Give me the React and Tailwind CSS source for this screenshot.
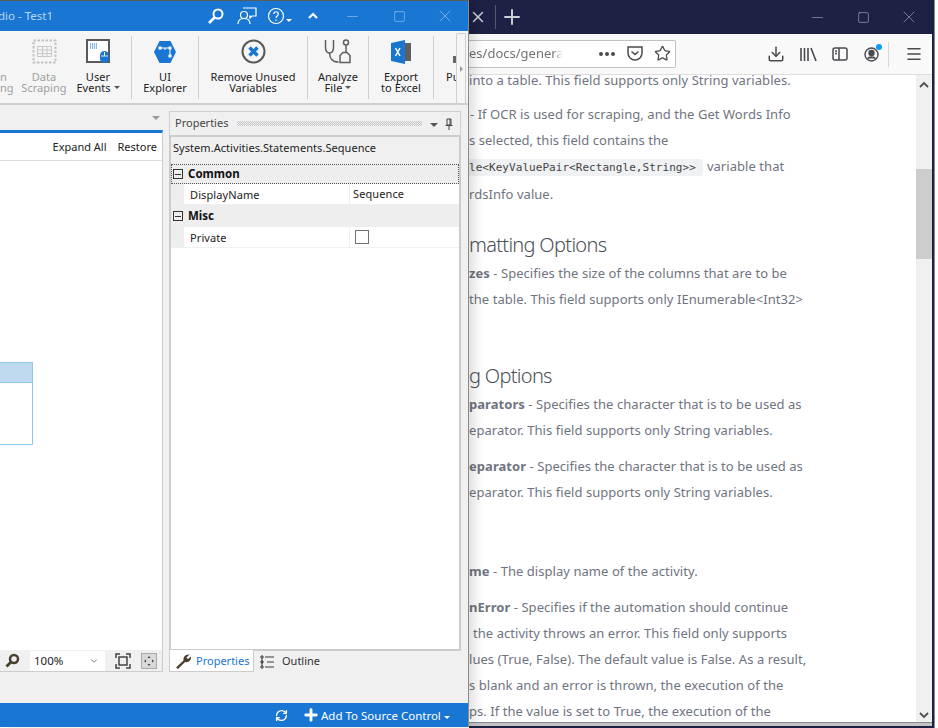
import React from 'react';
import { ChevronDown, Plus, RefreshCw, Star, X, Minus, Square, Download, Menu } from 'lucide-react';

const Caret = ({ className = 'border-t-[#555]' }) => (
  <span className={`inline-block w-0 h-0 border-x-[3px] border-x-transparent border-t-[3px] ${className}`} />
);

const Sep = () => <div className="w-px h-[63px] mt-[5px] bg-[#cfcfcf] shrink-0" />;

const RibbonItem = ({ icon, lines, width, dim, caret }) => (
  <div className={`${width} shrink-0 flex flex-col items-center`}>
    <div className="h-[33px] flex items-end justify-center">{icon}</div>
    <div className={`mt-[7px] text-[11px] tracking-[0.05px] leading-[11px] text-center whitespace-nowrap ${dim ? 'text-[#a0a0a0]' : 'text-[#222]'}`}>
      <div>{lines[0]}</div>
      <div className="flex items-center justify-center gap-[3px]">
        {lines[1]}
        {caret && <Caret />}
      </div>
    </div>
  </div>
);

const DataIcon = () => (
  <svg width="25" height="25" viewBox="0 0 25 25" fill="none">
    <rect x="1.500" y="1.500" width="22" height="22" stroke="#c4c4c4" strokeWidth="2" strokeDasharray="2.5 1.5" />
    <path d="M5.500 7.500h14v10h-14zM5.500 11h14M5.500 14.500h14M10.500 7.500v10M15 7.500v10" stroke="#c9c9c9" />
  </svg>
);

const UserEventsIcon = () => (
  <svg width="25" height="25" viewBox="0 0 25 25" fill="none">
    <rect x="1" y="1" width="22" height="22" fill="#fff" stroke="#5a5a5a" strokeWidth="2" />
    <path d="M4 5h7M4 7h7M4 9h7" stroke="#1976d2" strokeWidth="1.2" strokeDasharray="1.2 0.8" />
    <rect x="14" y="12" width="9" height="12" rx="4.5" fill="#1976d2" />
    <path d="M18.500 13v4" stroke="#fff" />
    <path d="M15 17h7" stroke="#fff" strokeWidth="0.8" />
  </svg>
);

const ExplorerIcon = () => (
  <svg width="22" height="24" viewBox="0 0 22 24">
    <path d="M5.500 1h11L22 12l-5.500 11h-11L0 12z" fill="#1976d2" />
    <path d="M6 8h10M16 8v8M11 8v2" stroke="#fff" strokeWidth="1" fill="none" />
    <rect x="4.500" y="6.500" width="3" height="3" fill="#fff" />
    <rect x="14.500" y="6.500" width="3" height="3" fill="#fff" />
    <rect x="14.500" y="14.500" width="3" height="3" fill="#fff" />
  </svg>
);

const RemoveIcon = () => (
  <svg width="25" height="25" viewBox="0 0 25 25" fill="none">
    <circle cx="12.500" cy="12.500" r="11" stroke="#595959" strokeWidth="2" />
    <path d="M8.500 8.500l8 8M16.500 8.500l-8 8" stroke="#1976d2" strokeWidth="3.400" />
  </svg>
);

const AnalyzeIcon = () => (
  <svg width="28" height="25" viewBox="0 0 28 25" fill="none" stroke="#5f5f5f" strokeWidth="1.500">
    <path d="M1.500 1v7c0 4 2 6 4 6s4-2 4-6V1" />
    <path d="M5.500 14c0 5 3 9 9 9" />
    <circle cx="22" cy="3.500" r="2.500" />
    <path d="M22 6v7" />
    <path d="M16 23.500h10v-7l-3-3h-4l-3 3z" />
  </svg>
);

const ExcelIcon = () => (
  <svg width="20" height="24" viewBox="0 0 20 24">
    <rect x="13" y="3" width="7" height="18" fill="#5f5f5f" />
    <path d="M0 3l14-3v24L0 21z" fill="#1976d2" />
    <path d="M4.500 8l4.500 8M9 8l-4.500 8" stroke="#fff" strokeWidth="1.500" fill="none" />
  </svg>
);

const lines = [
  { cls: '', text: 'into a table. This field supports only String variables.' },
  { cls: 'mt-[8px] pl-[1px]', text: '- If OCR is used for scraping, and the Get Words Info' },
  { cls: '', text: 's selected, this field contains the' },
  { cls: '', code: true },
  { cls: 'mt-[2px]', text: 'rdsInfo value.' },
  { cls: 'mt-[25px] text-[20px] tracking-[-0.7px] font-light text-[#4a4f55]', text: 'matting Options' },
  { cls: 'mt-[2px]', bold: 'zes', text: ' - Specifies the size of the columns that are to be' },
  { cls: '', text: 'the table. This field supports only IEnumerable<Int32>' },
  { cls: 'mt-[51px] text-[20px] tracking-[-0.7px] font-light text-[#4a4f55]', text: 'g Options' },
  { cls: 'mt-[2px]', bold: 'parators', text: ' - Specifies the character that is to be used as' },
  { cls: '', text: 'eparator. This field supports only String variables.' },
  { cls: 'mt-[10px]', bold: 'eparator', text: ' - Specifies the character that is to be used as' },
  { cls: '', text: 'eparator. This field supports only String variables.' },
  { cls: 'mt-[53px]', bold: 'me', text: ' - The display name of the activity.' },
  { cls: 'mt-[10px]', bold: 'nError', text: ' - Specifies if the automation should continue' },
  { cls: 'pl-[4px]', text: 'the activity throws an error. This field only supports' },
  { cls: '', text: 'lues (True, False). The default value is False. As a result,' },
  { cls: '', text: 's blank and an error is thrown, the execution of the' },
  { cls: '', text: 'ps. If the value is set to True, the execution of the' },
];

const PropRow = ({ name, children }) => (
  <div className="flex h-[21px] border-b border-[#f0f0f0] text-[11px] tracking-[0.1px] text-[#222]">
    <div className="w-[13px] bg-[#eeeeee] shrink-0" />
    <div className="w-[166px] pl-[6px] leading-[22px] border-r border-[#eeeeee]">{name}</div>
    <div className="flex-1 pl-[3px] leading-[19px]">{children}</div>
  </div>
);

const Toggle = () => (
  <span className="w-[10px] h-[10px] border border-[#333] flex items-center justify-center shrink-0">
    <span className="w-[6px] h-px bg-[#333]" />
  </span>
);

const App = () => (
  <div className="w-[938px] h-[728px] flex overflow-hidden bg-white font-['Noto_Sans',sans-serif]">
    {/* studio window */}
    <div className="relative z-10 w-[469px] h-[727px] shrink-0 flex flex-col bg-[#f0f0f0] border-r border-[#8a8a8a] border-t border-t-[#5a5a5a] shadow-[6px_0_10px_rgba(0,0,0,0.12)]">
      <div className="h-[30px] bg-[#1976d2] flex items-center text-white shrink-0">
        <span className="text-[11.5px] text-[#b9d6f3] w-[208px] -ml-[2px] whitespace-nowrap">dio - Test1</span>
        <svg width="18" height="18" viewBox="0 0 18 18" fill="none" stroke="#fff" strokeWidth="2" className="ml-[1px]">
          <circle cx="11" cy="7" r="4.500" />
          <path d="M7.500 10.500L2 16" strokeWidth="2.600" />
        </svg>
        <svg width="20" height="18" viewBox="0 0 20 18" fill="none" stroke="#fff" strokeWidth="1.200" className="ml-[12px]">
          <circle cx="7" cy="8" r="3.500" />
          <path d="M1 17c0-4 3-5.500 6-5.500s6 1.500 6 5.500M6 1h13v8h-4l-2 2v-2h-1" />
        </svg>
        <svg width="18" height="18" viewBox="0 0 18 18" fill="none" stroke="#fff" strokeWidth="1.200" className="ml-[10px]">
          <circle cx="9" cy="9" r="7.500" />
          <path d="M6.800 7c0-3 4.500-3 4.500 0 0 2-2.300 2-2.300 4" />
          <path d="M9 12.500v1.500" />
        </svg>
        <span className="ml-[1px]"><Caret className="border-t-white" /></span>
        <svg width="12" height="10" viewBox="0 0 12 10" fill="none" stroke="#fff" strokeWidth="2.200" className="ml-[15px]">
          <path d="M2 7l4-4 4 4" />
        </svg>
        <Minus size={17} strokeWidth={1} className="ml-[25px] text-[#8bb9e8]" />
        <Square size={13} strokeWidth={1} className="ml-[32px] text-[#b9d6f3]" />
        <X size={20} strokeWidth={1} className="ml-[29px] text-[#8bb9e8]" />
      </div>

      {/* ribbon */}
      <div className="relative h-[74px] shrink-0 flex bg-[#f5f5f5] border-b-2 border-[#cfcfcf] overflow-hidden">
        <div className="w-[15px] shrink-0 flex flex-col items-start pt-[40px] text-[11px] leading-[11px] text-[#a0a0a0]">
          <span>n</span>
          <span>ng</span>
        </div>
        <RibbonItem width="w-[58px]" dim icon={<DataIcon />} lines={['Data', 'Scraping']} />
        <RibbonItem width="w-[50px]" icon={<UserEventsIcon />} lines={['User', 'Events']} caret />
        <div className="w-[8px] shrink-0" />
        <Sep />
        <RibbonItem width="w-[66px]" icon={<ExplorerIcon />} lines={['UI', 'Explorer']} />
        <Sep />
        <RibbonItem width="w-[108px]" icon={<RemoveIcon />} lines={['Remove Unused', 'Variables']} />
        <Sep />
        <RibbonItem width="w-[60px]" icon={<AnalyzeIcon />} lines={['Analyze', 'File']} caret />
        <Sep />
        <RibbonItem width="w-[64px]" icon={<ExcelIcon />} lines={['Export', 'to Excel']} />
        <Sep />
        <div className="w-[22px] shrink-0 overflow-hidden pl-[12px] pt-[25px] text-[11px] text-[#222] leading-[11px] whitespace-nowrap">
          <div className="w-[3px] h-[7px] ml-[7px] bg-[#666]" />
          <div className="mt-[8px]">Pu</div>
        </div>
        <div className="absolute left-[456px] top-[2px] bottom-0 w-[10px] bg-[#f5f5f5] border border-b-0 border-[#cfcfcf] rounded-t-[2px] flex items-center justify-center">
          <span className="w-0 h-0 border-y-[3px] border-y-transparent border-l-[3px] border-l-[#999]" />
        </div>
      </div>

      {/* panes */}
      <div className="flex-1 flex min-h-0 pr-[7px]">
        <div className="w-[163px] shrink-0 flex flex-col pb-[31px]">
          <div className="h-[25px] flex justify-end items-center pr-[3px] shrink-0">
            <Caret className="border-t-[#999] border-t-[4px] border-x-[4px]" />
          </div>
          <div className="flex-1 flex flex-col bg-white border-t-[3px] border-[#1976d2] border-r border-r-[#cccccc] min-h-0">
            <div className="h-[28px] flex justify-end items-center gap-[11px] pt-[2px] pr-[5px] border-b border-[#dddddd] text-[11px] text-[#222] shrink-0">
              <span>Expand All</span>
              <span>Restore</span>
            </div>
            <div className="flex-1 pt-[201px]">
              <div className="w-[33px] h-[83px] border border-l-0 border-[#8fc6ea] rounded-r-[1px]">
                <div className="h-[20px] bg-[#bfd9ef] border-b border-[#8fc6ea]" />
              </div>
            </div>
            <div className="h-[22px] flex items-center bg-[#f0f0f0] border-b border-[#cccccc] shrink-0">
              <svg width="15" height="15" viewBox="0 0 15 15" fill="none" stroke="#4a4030" className="ml-[5px]">
                <circle cx="9" cy="6" r="4" strokeWidth="2.500" />
                <path d="M6 9l-4.500 4.500" strokeWidth="2.800" />
              </svg>
              <div className="ml-[10px] w-[75px] h-[20px] bg-white text-[11.5px] leading-[21px] pl-[4px] flex items-center justify-between pr-[6px] text-[#222]">
                100%
                <ChevronDown size={10} className="text-[#666]" />
              </div>
              <svg width="16" height="16" viewBox="0 0 16 16" fill="none" stroke="#444" className="ml-[10px]">
                <rect x="4" y="4" width="8" height="8" strokeWidth="1.500" />
                <path d="M1 5V1h4M11 1h4v4M15 11v4h-4M5 15H1v-4" strokeWidth="1.500" />
              </svg>
              <div className="ml-[10px] w-[16px] h-[16px] bg-[#d8d8d8] border border-[#aaa] flex items-center justify-center">
                <svg width="12" height="12" viewBox="0 0 12 12" fill="#444">
                  <path d="M6 1l1.500 2h-3zM6 11l-1.500-2h3zM1 6l2-1.500v3zM11 6l-2 1.500v-3z" />
                </svg>
              </div>
            </div>
          </div>
        </div>

        <div className="ml-[6px] w-[292px] flex flex-col pt-[6px] pb-[31px]">
          <div className="h-[24px] flex items-center border border-[#cfcfcf] border-b-0 pl-[5px] pr-[5px] text-[11px] text-[#444] shrink-0">
            <span className="w-[62px]">Properties</span>
            <div className="w-[185px] h-[5px] bg-[repeating-conic-gradient(#c4c4c4_0_25%,transparent_0_50%)] bg-[length:2px_2px]" />
            <span className="ml-[8px]"><Caret className="border-t-[#555] border-t-[4px] border-x-[4px]" /></span>
            <svg width="10" height="12" viewBox="0 0 10 12" fill="none" stroke="#444" className="ml-[6px]">
              <path d="M3 1h4v6H3zM1.500 7.500h7M5 8v4M6 1v6" />
            </svg>
          </div>
          <div className="flex-1 flex flex-col bg-white border-2 border-[#cccccc] min-h-0">
            <div className="h-[27px] bg-[#f0f0f0] text-[11px] tracking-[0.05px] leading-[21px] pl-[2px] text-[#222] shrink-0">System.Activities.Statements.Sequence</div>
            <div className="h-[20px] flex items-center gap-[5px] pl-[1px] bg-[#eeeeee] border border-dotted border-[#555] text-[11.5px] font-bold text-[#111]">
              <Toggle />
              Common
            </div>
            <PropRow name="DisplayName">Sequence</PropRow>
            <div className="h-[22px] flex items-center gap-[5px] pl-[2px] bg-[#eeeeee] text-[11.5px] font-bold text-[#111]">
              <Toggle />
              Misc
            </div>
            <PropRow name="Private">
              <span className="block mt-[3px] ml-[2px] w-[14px] h-[14px] bg-white border border-[#707070]" />
            </PropRow>
          </div>
          <div className="h-[22px] flex items-center text-[11px] shrink-0 -mt-[1px]">
            <div className="w-[85px] h-[22px] pt-[1px] bg-white border border-t-0 border-[#cccccc] flex items-center gap-[4px] pl-[5px] text-[#1976d2]">
              <svg width="17" height="17" viewBox="0 0 17 17" fill="#4a3f2f">
                <path d="M1 14.500L8.500 7.500C8 4 10.500 1 14.500 1.500L11.500 4.500 13 6 16 3.500C16.500 7 13.500 10 10 9L3 16z" />
              </svg>
              Properties
            </div>
            <svg width="14" height="14" viewBox="0 0 14 14" fill="none" stroke="#3a3a3a" className="ml-[6px] mt-[1px]">
              <path d="M1 1h2v2H1zM1 6h2v2H1zM1 11h2v2H1zM5 2h9M7 7h7M5 12h9M2 3v8" />
            </svg>
            <span className="ml-[8px] mt-[1px] text-[#333]">Outline</span>
          </div>
        </div>
      </div>

      <div className="h-[24px] bg-[#1976d2] flex items-center text-white text-[11.5px] shrink-0">
        <RefreshCw size={13} strokeWidth={2.500} className="ml-[275px]" />
        <Plus size={18} strokeWidth={3.800} className="ml-[14px]" />
        <span className="ml-[1px] pt-[1px] whitespace-nowrap">Add To Source Control</span>
        <span className="ml-[3px]"><Caret className="border-t-white" /></span>
      </div>
    </div>

    {/* browser window */}
    <div className="w-[466px] h-[728px] shrink-0 flex flex-col bg-[#1d2144] pr-[2px] border-r border-[#8a8a8a]">
      <div className="h-[34px] flex items-center text-[#ccced6] shrink-0">
        <X size={18} strokeWidth={2} />
        <div className="ml-[8px] w-px h-[24px] bg-[#55586f]" />
        <Plus size={24} strokeWidth={2} className="ml-[4px]" />
        <Minus size={17} strokeWidth={1} className="ml-[285px] text-[#9a9cab]" />
        <Square size={13} strokeWidth={1} className="ml-[31px] text-[#c4c5cd]" />
        <X size={20} strokeWidth={1} className="ml-[29px] text-[#8c8e9f]" />
      </div>
      <div className="h-[41px] flex items-center bg-[#f9f9fa] border-b border-[#dddddd] shrink-0 text-[#4a4a4f]">
        <div className="w-[207px] h-[28px] -mt-[1px] bg-white border border-l-0 border-[#c0c0c0] rounded-r-[2px] flex items-center text-[13px] whitespace-nowrap overflow-hidden">
          <span className="w-[120px] overflow-hidden bg-gradient-to-r from-[#6d6d70] from-[70%] to-transparent to-[78%] bg-clip-text text-transparent">es/docs/genera</span>
          <span className="ml-[10px] flex gap-[2px]">
            <i className="w-[4px] h-[4px] rounded-full bg-[#4a4a4f]" />
            <i className="w-[4px] h-[4px] rounded-full bg-[#4a4a4f]" />
            <i className="w-[4px] h-[4px] rounded-full bg-[#4a4a4f]" />
          </span>
          <svg width="16" height="15" viewBox="0 0 16 15" fill="none" stroke="#4a4a4f" strokeWidth="1.500" className="ml-[12px]">
            <path d="M1 1h14v6a7 7 0 0 1-14 0zM4.500 5.500L8 8.500l3.500-3" />
          </svg>
          <Star size={17} strokeWidth={1.800} className="ml-[11px]" />
        </div>
        <Download size={18} strokeWidth={2} className="ml-[91px]" />
        <svg width="17" height="15" viewBox="0 0 17 15" fill="none" stroke="#4a4a4f" strokeWidth="1.600" className="ml-[15px]">
          <path d="M1 1v13M4.500 1v13M8 1v13M11 1l5 13" />
        </svg>
        <svg width="16" height="14" viewBox="0 0 16 14" fill="none" stroke="#4a4a4f" strokeWidth="1.500" className="ml-[15px]">
          <rect x="1" y="1" width="14" height="12" rx="2" />
          <path d="M7 1v12M3 4h2M3 6.500h2" />
        </svg>
        <div className="relative ml-[16px] w-[15px] h-[15px]">
          <svg width="15" height="15" viewBox="0 0 15 15" fill="none" stroke="#4a4a4f" strokeWidth="1.400">
            <circle cx="7.500" cy="7.500" r="6.500" />
            <circle cx="7.500" cy="6" r="2.500" fill="#4a4a4f" />
            <path d="M3.500 11.500c1-2 7-2 8 0" fill="#4a4a4f" />
          </svg>
          <span className="absolute -top-[3px] -right-[3px] w-[6px] h-[6px] rounded-full bg-[#0a9dff]" />
        </div>
        <div className="ml-[9px] w-px h-[25px] bg-[#d7d7d8]" />
        <Menu size={18} strokeWidth={2} className="ml-[16px]" />
      </div>

      <div className="h-[647px] flex bg-white overflow-hidden shrink-0">
        <div className="flex-1 -mt-[8px] text-[13px] text-[#6f7480] tracking-[0.05px] whitespace-nowrap">
          {lines.map((line, i) => (
            <div key={i} className={`h-[26px] leading-[26px] ${line.cls}`}>
              {line.code ? (
                <>
                  <code className="font-['DejaVu_Sans_Mono',monospace] text-[11px] font-medium text-[#444] bg-[#eff1f3] rounded-r-[3px] py-[2px] pr-[7px]">{'le<KeyValuePair<Rectangle,String>>'}</code>
                  <span className="ml-[4px]">variable that</span>
                </>
              ) : (
                <>
                  {line.bold && <b className="font-bold">{line.bold}</b>}
                  {line.text}
                </>
              )}
            </div>
          ))}
        </div>
        <div className="w-[16px] shrink-0 bg-[#f0f0f0] flex flex-col items-center">
          <svg width="10" height="8" viewBox="0 0 10 8" fill="none" stroke="#505050" strokeWidth="1.800" className="mt-[6px]">
            <path d="M1 6l4-4 4 4" />
          </svg>
          <div className="mt-[80px] w-full h-[90px] shrink-0 bg-[#cdcdcd]" />
          <svg width="10" height="8" viewBox="0 0 10 8" fill="none" stroke="#505050" strokeWidth="1.800" className="mt-[452px]">
            <path d="M1 2l4 4 4-4" />
          </svg>
        </div>
      </div>
      <div className="h-[4px] bg-[#c4c4c4] border-t border-[#8a8a8a] shrink-0" />
    </div>
  </div>
);

export default App;
